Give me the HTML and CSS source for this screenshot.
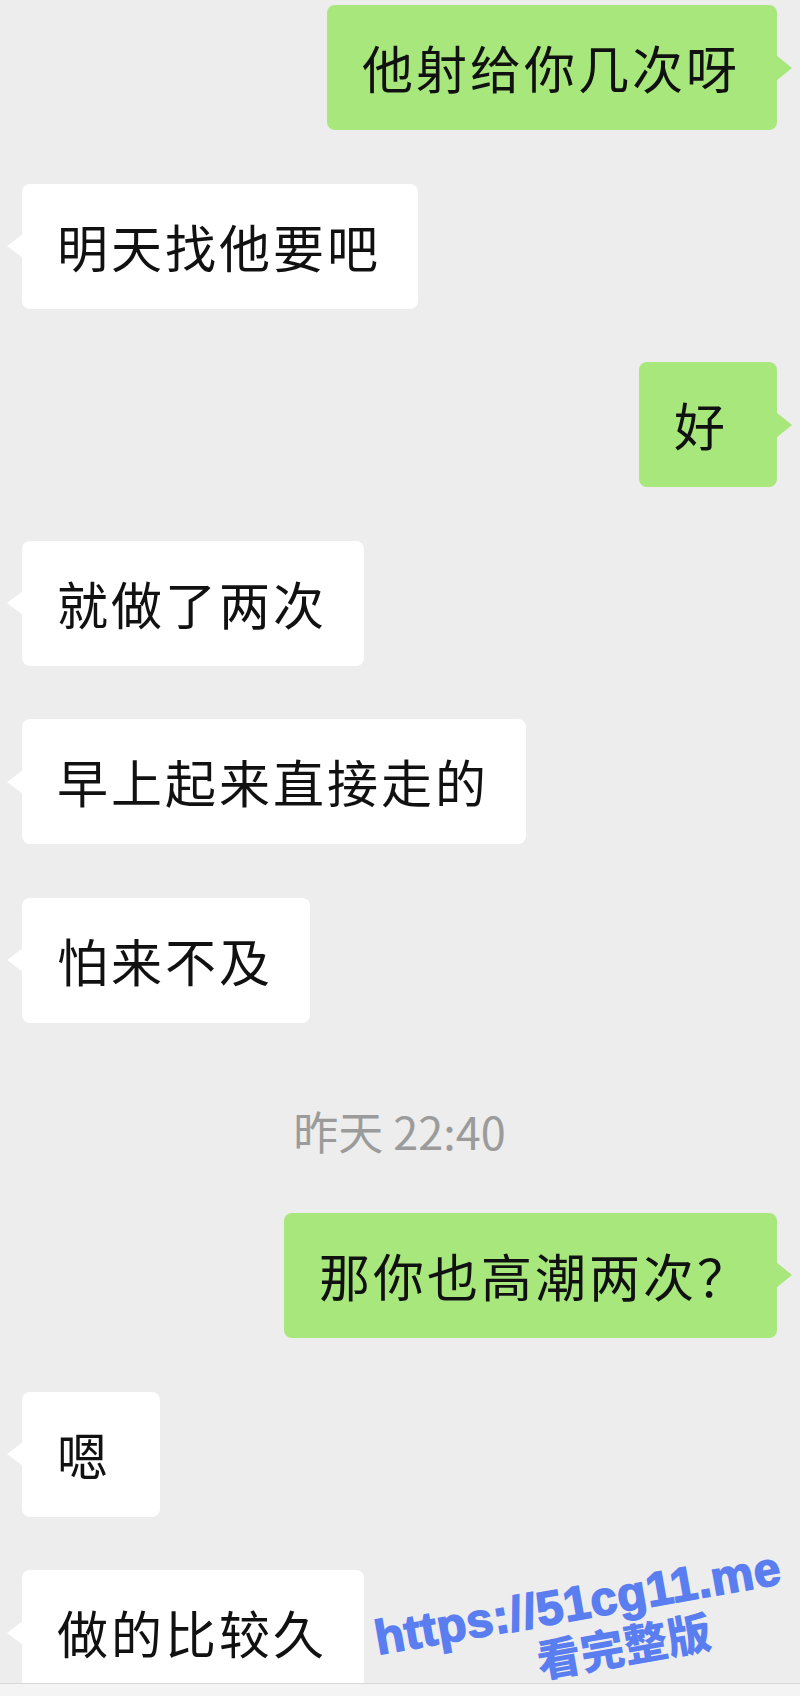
FILE: index.html
```html
<!DOCTYPE html>
<html lang="zh-CN">
<head>
<meta charset="utf-8">
<title>聊天记录</title>
<link rel="stylesheet" href="styles.css">
</head>
<body>
<div class="screen">
  <div class="chat">
    <div class="row me"><div class="bubble green">他射给你几次呀</div></div>
    <div class="row them"><div class="bubble white">明天找他要吧</div></div>
    <div class="row me"><div class="bubble green">好</div></div>
    <div class="row them"><div class="bubble white">就做了两次</div></div>
    <div class="row them"><div class="bubble white">早上起来直接走的</div></div>
    <div class="row them"><div class="bubble white">怕来不及</div></div>
    <div class="time">昨天 22:40</div>
    <div class="row me"><div class="bubble green">那你也高潮两次<span class="q">？</span></div></div>
    <div class="row them"><div class="bubble white">嗯</div></div>
    <div class="row them"><div class="bubble white">做的比较久</div></div>
  </div>
  <div class="footer"></div>
  <div class="watermark">
    <div class="wm-url">https://51cg11.me</div>
    <div class="wm-cn">看完整版</div>
  </div>
</div>
</body>
</html>
```
FILE: styles.css
```css
html, body {
  margin: 0;
  padding: 0;
  background: #ededed;
}

.screen {
  position: relative;
  width: 800px;
  height: 1696px;
  display: flex;
  flex-direction: column;
  overflow: hidden;
  background: #ededed;
  font-family: "Noto Sans CJK SC", "Noto Sans", sans-serif;
}

.chat {
  flex: 1;
  min-height: 0;
  overflow: hidden;
  display: flex;
  flex-direction: column;
  gap: 53.6px;
  padding: 5px 23px 0 22px;
}

.row {
  display: flex;
}

.row.me {
  justify-content: flex-end;
}

.row.them {
  justify-content: flex-start;
}

.bubble {
  position: relative;
  box-sizing: border-box;
  min-width: 138px;
  padding: 29px 37px 29px 35px;
  line-height: 67px;
  font-size: 51px;
  letter-spacing: 3px;
  color: #111111;
  border-radius: 8px;
  white-space: nowrap;
}

.bubble .q {
  letter-spacing: -8px;
}

.bubble.green {
  background: #a8e77b;
}

.bubble.white {
  background: #ffffff;
}

.bubble.white::before {
  content: "";
  position: absolute;
  left: -15px;
  top: 50%;
  margin-top: -12px;
  border-right: 16px solid #ffffff;
  border-top: 12px solid transparent;
  border-bottom: 12px solid transparent;
}

.bubble.green::after {
  content: "";
  position: absolute;
  right: -15px;
  top: 50%;
  margin-top: -13px;
  border-left: 16px solid #a8e77b;
  border-top: 13px solid transparent;
  border-bottom: 13px solid transparent;
}

.time {
  text-align: center;
  font-size: 45px;
  line-height: 44px;
  padding: 32.4px 0 6.4px 0;
  color: #9b9b9b;
}

.footer {
  flex: none;
  height: 12px;
  border-top: 1px solid #d8d8d8;
  background: #f4f4f4;
}

.watermark {
  position: absolute;
  left: 352px;
  top: 1580px;
  width: 460px;
  transform: rotate(-10deg);
  transform-origin: 50% 50%;
  color: #5a7ef0;
  text-align: center;
}

.wm-url {
  font-family: "Liberation Sans", Arial, sans-serif;
  font-weight: 700;
  font-size: 48px;
  line-height: 46px;
  letter-spacing: 0.5px;
  -webkit-text-stroke: 1.6px #5a7ef0;
}

.wm-cn {
  font-family: "Noto Sans CJK SC", sans-serif;
  font-weight: 900;
  font-size: 44px;
  line-height: 50px;
  padding-left: 76px;
}
```
